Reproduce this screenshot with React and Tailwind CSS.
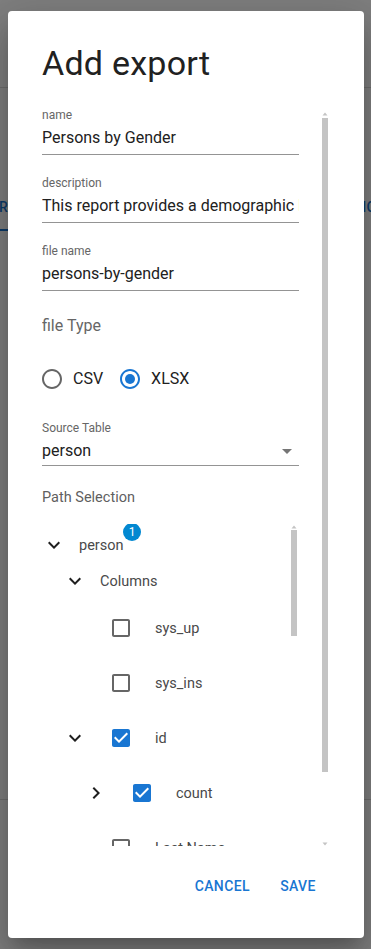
import React from 'react'

const ExpandMore = () => (
  <svg width="24" height="24" viewBox="0 0 24 24" className="shrink-0 fill-[#1f1f1f]">
    <path d="M16.59 8.59 12 13.17 7.41 8.59 6 10l6 6 6-6z" />
  </svg>
)

const ChevronRight = () => (
  <svg width="24" height="24" viewBox="0 0 24 24" className="shrink-0 fill-[#1f1f1f]">
    <path d="M10 6 8.59 7.41 13.17 12l-4.58 4.59L10 18l6-6z" />
  </svg>
)

const Checkbox = ({ checked }) => (
  <svg width="24" height="24" viewBox="0 0 24 24" className={checked ? 'shrink-0 fill-[#1976d2]' : 'shrink-0 fill-[#666666]'}>
    {checked ? (
      <path d="M19 3H5c-1.11 0-2 .9-2 2v14c0 1.1.89 2 2 2h14c1.11 0 2-.9 2-2V5c0-1.1-.89-2-2-2zm-9 14l-5-5 1.41-1.41L10 14.17l7.59-7.590L19 8l-9 9z" />
    ) : (
      <path d="M19 5v14H5V5h14m0-2H5c-1.1 0-2 .9-2 2v14c0 1.1.9 2 2 2h14c1.1 0 2-.9 2-2V5c0-1.1-.9-2-2-2z" />
    )}
  </svg>
)

const Radio = ({ checked }) => (
  <svg width="20" height="20" viewBox="2 2 20 20" className={checked ? 'shrink-0 fill-[#1976d2]' : 'shrink-0 fill-[#666666]'}>
    <path d="M12 2C6.48 2 2 6.48 2 12s4.48 10 10 10 10-4.48 10-10S17.52 2 12 2zm0 18c-4.42 0-8-3.58-8-8s3.58-8 8-8 8 3.58 8 8-3.58 8-8 8z" />
    {checked && <circle cx="12" cy="12" r="5" />}
  </svg>
)

const ArrowUp = () => (
  <svg width="6" height="4" viewBox="0 0 6 4" className="fill-[#c4c4c4]">
    <path d="M3 0.5 5.5 3.5H0.5z" />
  </svg>
)

const ArrowDown = () => (
  <svg width="6" height="4" viewBox="0 0 6 4" className="fill-[#c4c4c4]">
    <path d="M0.5 0.5h5L3 3.5z" />
  </svg>
)

function Field({ label, value, className = '' }) {
  return (
    <div className={className}>
      <div className="text-[12px] leading-[16px] text-[#666666]">{label}</div>
      <div className="mt-[3px] pb-[4px] border-b border-[#949494] text-[16px] leading-[24px] text-[#212121] whitespace-nowrap overflow-hidden">
        {value}
      </div>
    </div>
  )
}

function TreeText({ children }) {
  return <span className="text-[14.5px] leading-[20px] text-[#4a4a4a] whitespace-nowrap">{children}</span>
}

function App() {
  return (
    <div className="relative w-full h-[949px] overflow-hidden bg-white font-[Roboto,sans-serif]">
      {/* page behind the dialog */}
      <div className="h-[88px] bg-white border-b border-[#dcdcdc]"></div>
      <div className="mt-[95px] h-[48px] flex justify-between items-stretch text-[14px] font-medium tracking-[0.4px] whitespace-nowrap">
        <div className="relative -ml-[38px] pr-[16px] flex items-center text-[#1976d2]">
          EXPORT
          <div className="absolute left-0 right-0 bottom-0 h-[2px] bg-[#1976d2]"></div>
        </div>
        <div className="-mr-[14px] flex items-center text-[#1976d2]">TOPICS</div>
      </div>
      <div className="mt-[568px] border-t border-[#dcdcdc]"></div>

      {/* backdrop */}
      <div className="absolute inset-0 bg-black/50"></div>

      {/* dialog */}
      <div className="absolute left-[8px] top-[11px] w-[356px] h-[927px] bg-white rounded-[4px] shadow-[0_11px_15px_-7px_rgba(0,0,0,0.2),0_24px_38px_3px_rgba(0,0,0,0.14),0_9px_46px_8px_rgba(0,0,0,0.12)] flex flex-col">
        <h2 className="pl-[34px] pt-[31px] text-[34px] leading-[42px] tracking-[0.25px] text-[#212121]">Add export</h2>

        <div className="mt-[22px] h-[740px] flex">
          <div className="ml-[34px] w-[257px] overflow-hidden pt-[1px]">
            <Field label="name" value="Persons by Gender" />
            <Field className="mt-[20px]" label="description" value="This report provides a demographic breakdown of persons by gender" />
            <Field className="mt-[20px]" label="file name" value="persons-by-gender" />

            <div className="mt-[23px] text-[16px] leading-[24px] text-[#666666]">file Type</div>
            <div className="mt-[20px] h-[42px] flex items-center text-[16px] text-[#212121]">
              <Radio checked={false} />
              <span className="ml-[11px]">CSV</span>
              <span className="ml-[17px] flex"><Radio checked /></span>
              <span className="ml-[11px]">XLSX</span>
            </div>

            <div className="mt-[20px] text-[12px] leading-[16px] text-[#666666]">Source Table</div>
            <div className="mt-[3px] pb-[2px] border-b border-[#949494] flex items-center justify-between">
              <span className="text-[16px] leading-[24px] text-[#212121]">person</span>
              <svg width="24" height="24" viewBox="0 0 24 24" className="fill-[#757575]">
                <path d="M7 10l5 5 5-5z" />
              </svg>
            </div>

            <div className="mt-[22px] text-[14.5px] leading-[20px] text-[#5f5f5f]">Path Selection</div>

            {/* tree */}
            <div className="mt-[16px] h-[360px] flex overflow-hidden">
              <div className="w-[249px]">
                <div className="relative h-[42px] flex items-center">
                  <ExpandMore />
                  <span className="ml-[13px]"><TreeText>person</TreeText></span>
                  <span className="absolute left-[81px] top-[-1px] w-[18px] h-[18px] rounded-full bg-[#0288d1] text-white text-[12px] leading-[18px] text-center">1</span>
                </div>
                <div className="h-[34px] pb-[4px] pl-[21px] flex items-center">
                  <ExpandMore />
                  <span className="ml-[13px]"><TreeText>Columns</TreeText></span>
                </div>
                <div className="h-[55px] pl-[67px] flex items-center">
                  <Checkbox checked={false} />
                  <span className="ml-[22px]"><TreeText>sys_up</TreeText></span>
                </div>
                <div className="h-[55px] pl-[67px] flex items-center">
                  <Checkbox checked={false} />
                  <span className="ml-[22px]"><TreeText>sys_ins</TreeText></span>
                </div>
                <div className="h-[55px] pl-[21px] flex items-center">
                  <ExpandMore />
                  <span className="ml-[22px] flex"><Checkbox checked /></span>
                  <span className="ml-[22px]"><TreeText>id</TreeText></span>
                </div>
                <div className="h-[55px] pl-[42px] flex items-center">
                  <ChevronRight />
                  <span className="ml-[22px] flex"><Checkbox checked /></span>
                  <span className="ml-[22px]"><TreeText>count</TreeText></span>
                </div>
                <div className="h-[55px] pl-[67px] flex items-center">
                  <Checkbox checked={false} />
                  <span className="ml-[22px]"><TreeText>Last Name</TreeText></span>
                </div>
              </div>
              {/* tree scrollbar */}
              <div className="w-[6px] flex flex-col items-center">
                <div className="mt-[1px] h-[4px] flex"><ArrowUp /></div>
                <div className="mt-[1px] w-[6px] h-[106px] bg-[#c4c4c4]"></div>
              </div>
            </div>
          </div>

          {/* outer scrollbar */}
          <div className="ml-[23px] w-[6px] flex flex-col items-center">
            <div className="mt-[6px] h-[4px] flex"><ArrowUp /></div>
            <div className="mt-[2px] w-[6px] h-[654px] bg-[#c4c4c4]"></div>
            <div className="mt-[70px] h-[4px] flex"><ArrowDown /></div>
          </div>
        </div>

        <div className="mt-[22px] pr-[34px] flex justify-end gap-[8px]">
          <button className="min-w-[64px] px-[8px] py-[6px] text-[14px] leading-[24px] font-medium tracking-[0.4px] uppercase text-[#1976d2]">Cancel</button>
          <button className="min-w-[64px] px-[8px] py-[6px] text-[14px] leading-[24px] font-medium tracking-[0.4px] uppercase text-[#1976d2]">Save</button>
        </div>
      </div>
    </div>
  )
}

export default App
